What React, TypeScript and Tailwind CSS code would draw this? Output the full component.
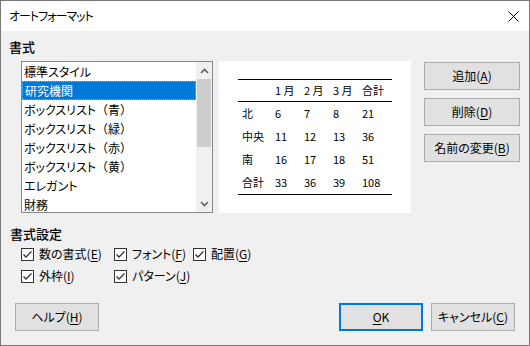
import React from "react";

const FONT = "font-['Noto_Sans_CJK_JP','Noto_Sans',sans-serif] [font-feature-settings:'palt']";

const STYLES: [string, string?][] = [
  ["標準スタイル"],
  ["研究機関"],
  ["ボックスリスト", "（青）"],
  ["ボックスリスト", "（緑）"],
  ["ボックスリスト", "（赤）"],
  ["ボックスリスト", "（黄）"],
  ["エレガント"],
  ["財務"],
];

const PREVIEW = [
  ["北", "6", "7", "8", "21"],
  ["中央", "11", "12", "13", "36"],
  ["南", "16", "17", "18", "51"],
  ["合計", "33", "36", "39", "108"],
];

// label with an underlined mnemonic letter, e.g. 追加(A)
function Mn({ text, k }: { text: string; k: string }) {
  return (
    <span className="whitespace-nowrap">
      {text}(<span className="underline underline-offset-2">{k}</span>)
    </span>
  );
}

function Btn({
  children,
  w = "w-[84px]",
  primary = false,
}: {
  children: React.ReactNode;
  w?: string;
  primary?: boolean;
}) {
  return (
    <div
      className={
        "flex h-[28px] items-center justify-center bg-[#e1e1e1] text-[12px] leading-none text-black " +
        w +
        (primary ? " border-2 border-[#0078d7]" : " border border-[#adadad]")
      }
    >
      {children}
    </div>
  );
}

function Check({ children, w }: { children: React.ReactNode; w: string }) {
  return (
    <div className={"flex h-[22px] shrink-0 items-center gap-[5px] " + w}>
      <div className="flex h-[13px] w-[13px] shrink-0 items-center justify-center border border-[#333] bg-white">
        <svg width="11" height="11" viewBox="0 0 11 11">
          <polyline points="1.5,5.5 4,8 9.5,2.5" fill="none" stroke="#333" strokeWidth="1.3" />
        </svg>
      </div>
      <span className="whitespace-nowrap text-[12px] leading-none text-black">{children}</span>
    </div>
  );
}

function Chevron({ up }: { up?: boolean }) {
  return (
    <svg width="9" height="6" viewBox="0 0 9 6">
      <polyline
        points={up ? "1,5 4.5,1.5 8,5" : "1,1 4.5,4.5 8,1"}
        fill="none"
        stroke="#606060"
        strokeWidth="1.6"
      />
    </svg>
  );
}

export default function App() {
  return (
    <div
      className={
        "flex h-[346px] w-[530px] flex-col overflow-hidden border border-[#777] bg-[#f0f0f0] text-black " +
        FONT
      }
    >
      {/* title bar */}
      <div className="flex h-[30px] shrink-0 items-center justify-between bg-white pl-[8px] pr-[10px]">
        <span className="text-[12px] leading-none tracking-[-1px]">オートフォーマット</span>
        <svg width="11" height="11" viewBox="0 0 11 11">
          <path d="M0.5 0.5L10.5 10.5M10.5 0.5L0.5 10.5" stroke="#000" strokeWidth="1" />
        </svg>
      </div>

      <div className="mt-[8px] pl-[8px] text-[13px] font-medium leading-[16px]">書式</div>

      {/* list + preview + buttons */}
      <div className="mt-[6px] flex pl-[20px]">
        <div className="flex h-[152px] w-[192px] border border-[#828790] bg-white">
          <div className="flex-1 text-[12px] leading-[19px]">
            {STYLES.map(([s, p], i) => (
              <div
                key={s + (p ?? "")}
                className={
                  "h-[19px] whitespace-nowrap pl-[2px] " +
                  (i === 1
                    ? "border border-dotted border-[#f39c3c] bg-[#0078d7] pl-[1px] leading-[17px] text-white"
                    : "")
                }
              >
                {s}
                {p && <span className="[font-feature-settings:normal]">{p}</span>}
              </div>
            ))}
          </div>
          <div className="flex w-[16px] flex-col bg-[#f0f0f0]">
            <div className="flex h-[17px] items-center justify-center">
              <Chevron up />
            </div>
            <div className="mx-[1px] h-[68px] bg-[#cdcdcd]" />
            <div className="flex-1" />
            <div className="flex h-[17px] items-center justify-center">
              <Chevron />
            </div>
          </div>
        </div>

        <div className="ml-[6px] h-[152px] w-[192px] bg-white pl-[19px] pt-[18px]">
          <div className="w-[154px] border-t border-b border-black text-[11px] leading-none">
            <div className="grid h-[22px] grid-cols-[37px_29px_29px_29px_1fr] items-center border-b border-black">
              <span />
              <span>1 月</span>
              <span>2 月</span>
              <span>3 月</span>
              <span>合計</span>
            </div>
            {PREVIEW.map((r) => (
              <div
                key={r[0]}
                className="grid h-[23px] grid-cols-[37px_29px_29px_29px_1fr] items-center"
              >
                {r.map((c, j) => (
                  <span key={j} className={j === 0 ? "pl-[4px]" : ""}>
                    {c}
                  </span>
                ))}
              </div>
            ))}
          </div>
        </div>

        <div className="ml-[13px] mt-[1px] flex flex-col gap-[8px]">
          <Btn w="w-[96px]">
            <Mn text="追加" k="A" />
          </Btn>
          <Btn w="w-[96px]">
            <Mn text="削除" k="D" />
          </Btn>
          <Btn w="w-[96px]">
            <Mn text="名前の変更" k="B" />
          </Btn>
        </div>
      </div>

      <div className="mt-[13px] pl-[9px] text-[13px] font-medium leading-[16px]">書式設定</div>

      <div className="mt-[1px] pl-[20px]">
        <div className="flex">
          <Check w="w-[93px]">
            <Mn text="数の書式" k="E" />
          </Check>
          <Check w="w-[79px]">
            <Mn text="フォント" k="F" />
          </Check>
          <Check w="w-[80px]">
            <Mn text="配置" k="G" />
          </Check>
        </div>
        <div className="flex">
          <Check w="w-[93px]">
            <Mn text="外枠" k="I" />
          </Check>
          <Check w="w-[79px]">
            <Mn text="パターン" k="J" />
          </Check>
        </div>
      </div>

      <div className="mt-[16px] flex px-[14px]">
        <Btn>
          <Mn text="ヘルプ" k="H" />
        </Btn>
        <div className="flex-1" />
        <Btn primary>
          <span>
            <span className="underline underline-offset-2">O</span>K
          </span>
        </Btn>
        <div className="w-[8px]" />
        <Btn>
          <Mn text="キャンセル" k="C" />
        </Btn>
      </div>
    </div>
  );
}
